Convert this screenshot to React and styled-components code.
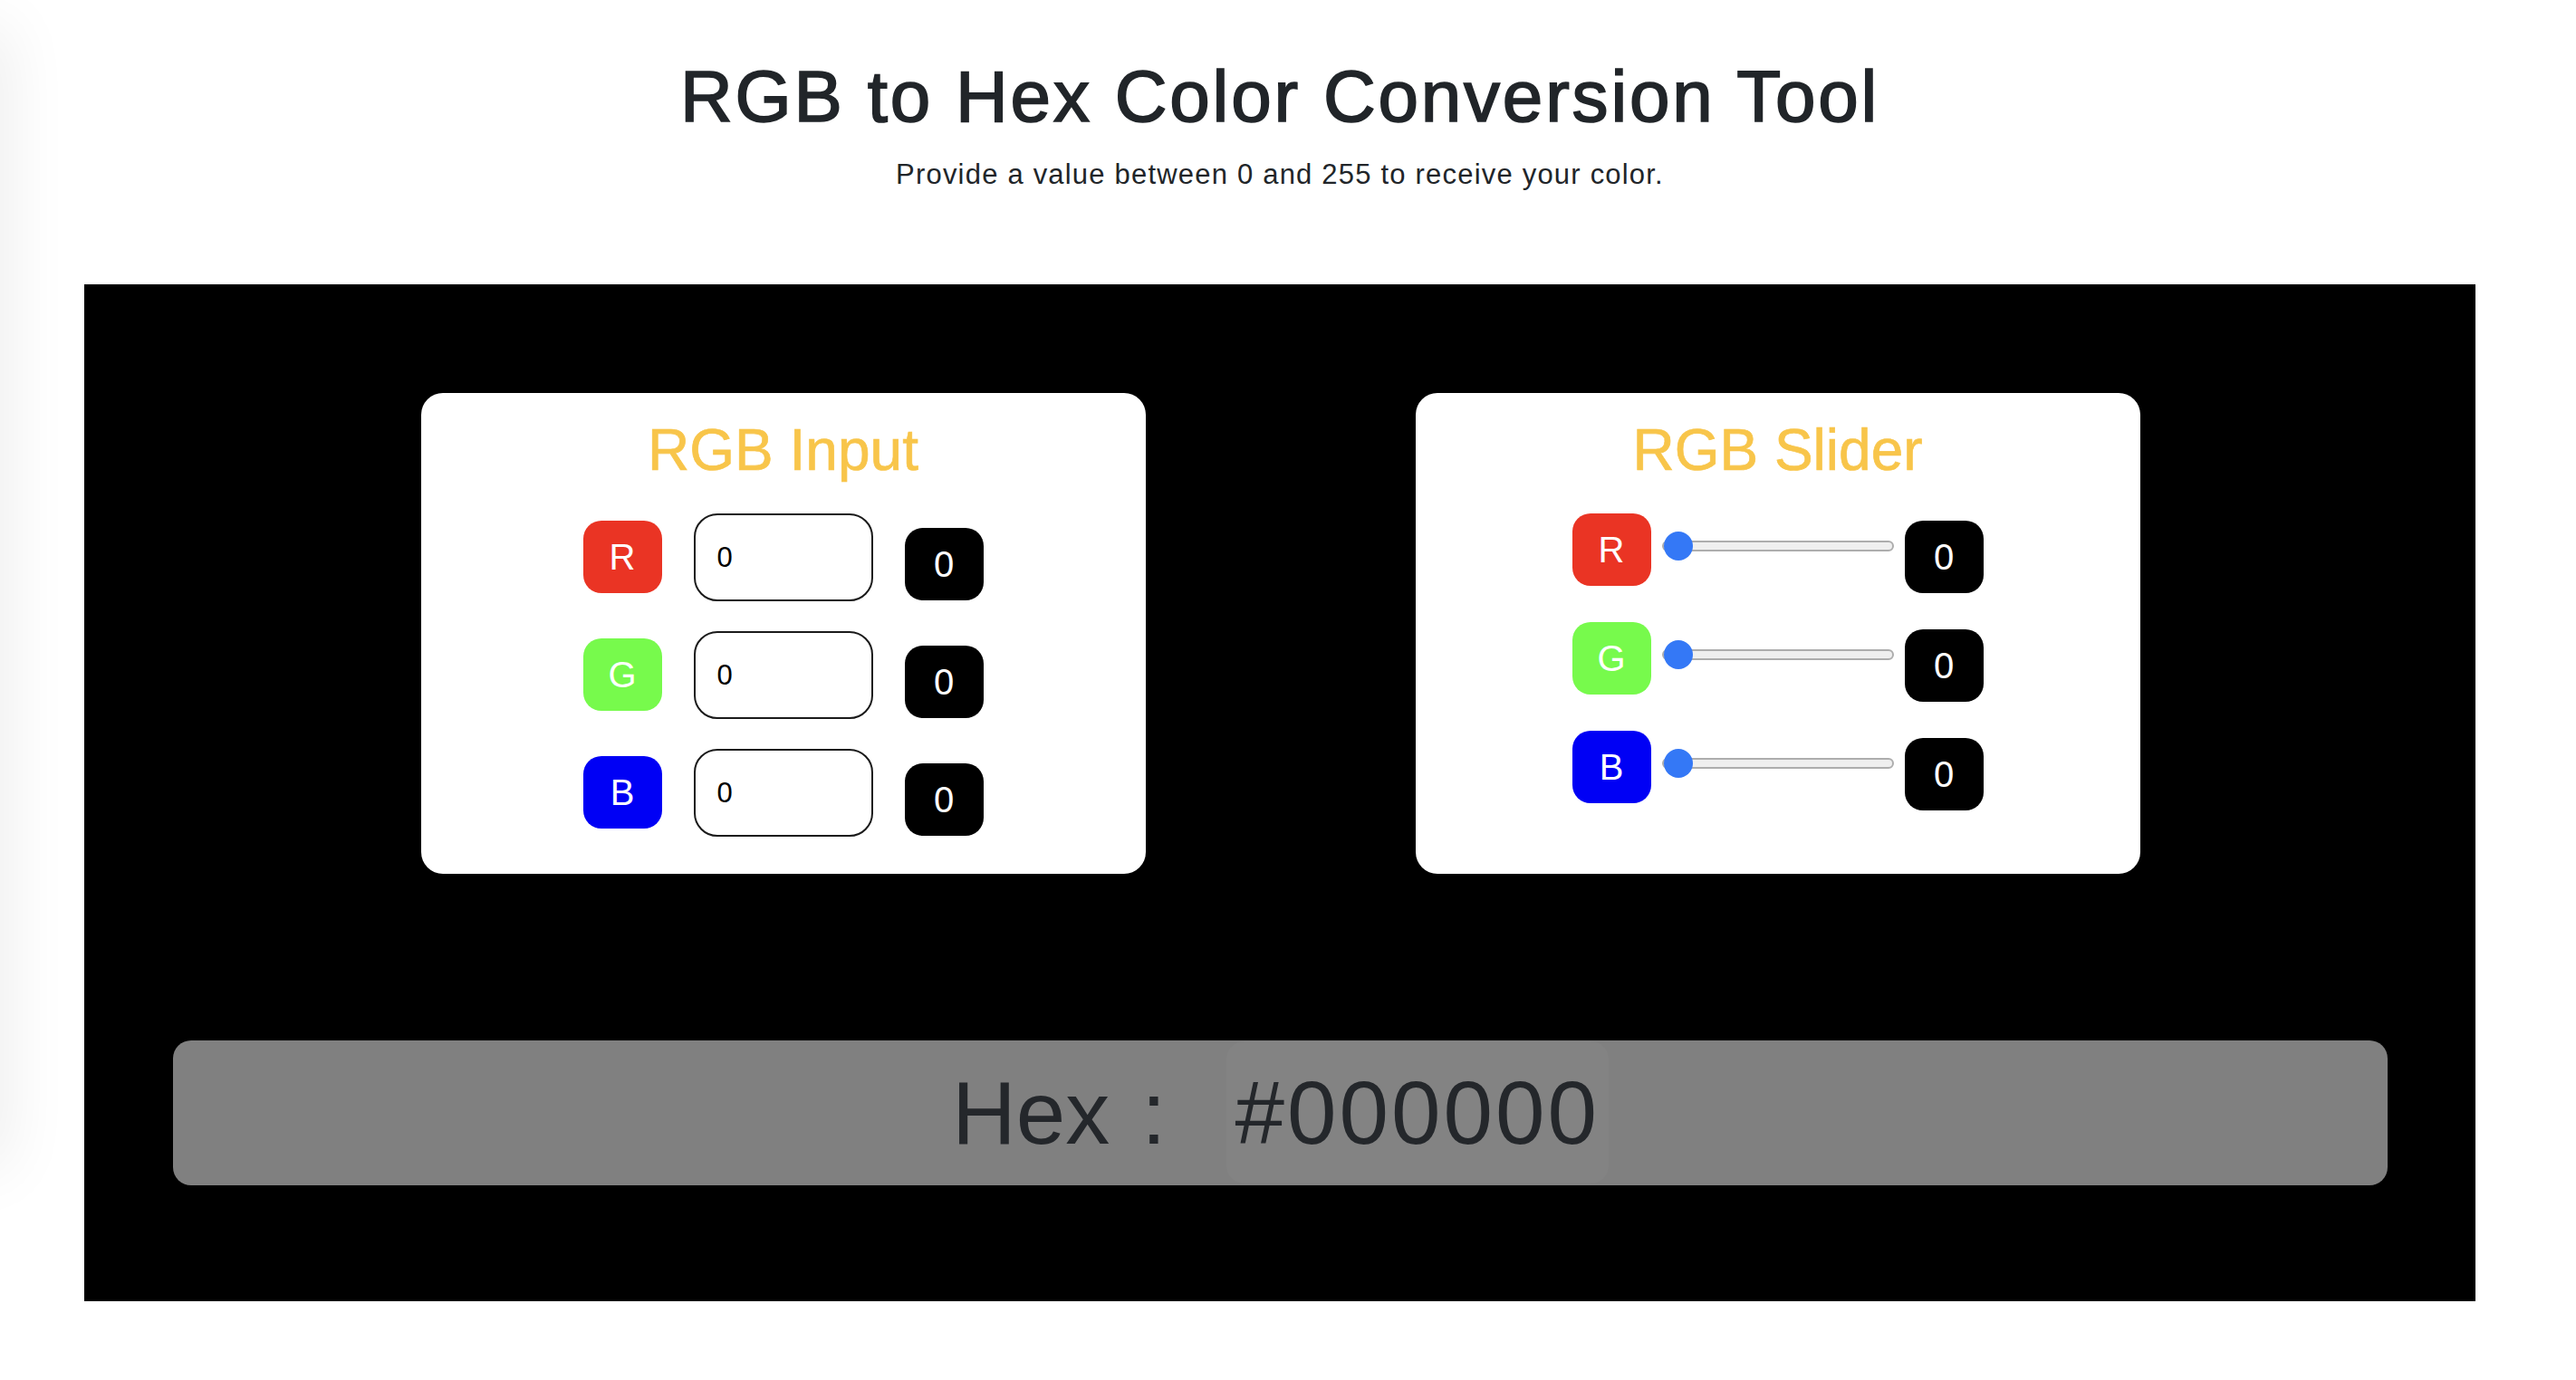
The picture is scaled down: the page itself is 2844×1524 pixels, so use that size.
import React, { useState } from "react";
import styled, { createGlobalStyle } from "styled-components";

const GlobalStyle = createGlobalStyle`
  html, body { margin: 0; padding: 0; background: #ffffff; }
  body { font-family: "Liberation Sans", Arial, sans-serif; color: #212529; }
  * { box-sizing: border-box; }
`;

const EdgeShadow = styled.div`
  position: fixed;
  left: -60px;
  top: 40px;
  width: 60px;
  height: 1240px;
  box-shadow: 0 0 70px 10px rgba(0, 0, 0, 0.07);
  pointer-events: none;
`;

const Page = styled.div`
  padding: 67px 111px 0 93px;
  text-align: center;
`;

const Title = styled.h1`
  margin: 0;
  font-size: 80px;
  line-height: 80px;
  font-weight: 400;
  letter-spacing: 2.8px;
  -webkit-text-stroke: 1.7px #212529;
  color: #212529;
`;

const Subtitle = styled.p`
  margin: 31px 0 0;
  font-size: 31px;
  line-height: 30px;
  letter-spacing: 1.2px;
  color: #212529;
`;

const Panel = styled.section`
  margin-top: 106px;
  background: #000000;
  padding: 120px 97px 128px 98px;
`;

const CardsRow = styled.div`
  display: flex;
  justify-content: center;
  gap: 298px;
`;

const Card = styled.div`
  width: 800px;
  height: 531px;
  background: #ffffff;
  border-radius: 24px;
  padding-top: 31px;
  display: flex;
  flex-direction: column;
  align-items: center;
`;

const CardTitle = styled.h2`
  margin: 0 0 38px;
  font-size: 64px;
  line-height: 64px;
  font-weight: 400;
  -webkit-text-stroke: 0.7px #f8c54a;
  color: #f8c54a;
`;

const Rows = styled.div`
  display: flex;
  flex-direction: column;
  gap: ${(p) => p.$gap}px;
`;

const Row = styled.div`
  display: flex;
  align-items: flex-start;
  gap: ${(p) => p.$gap}px;
`;

const Badge = styled.div`
  width: 87px;
  height: 80px;
  border-radius: 20px;
  background: ${(p) => p.$color};
  color: #ffffff;
  font-size: 40px;
  display: flex;
  align-items: center;
  justify-content: center;
  margin-top: ${(p) => p.$offset || 0}px;
`;

const ValueBox = styled.div`
  width: 87px;
  height: 80px;
  border-radius: 20px;
  background: #000000;
  color: #ffffff;
  font-size: 40px;
  display: flex;
  align-items: center;
  justify-content: center;
  margin-top: ${(p) => p.$offset || 0}px;
`;

const NumberInput = styled.input`
  width: 198px;
  height: 97px;
  border: 2px solid #1a1a1a;
  border-radius: 26px;
  padding: 0 0 0 24px;
  font-family: "Liberation Sans", Arial, sans-serif;
  font-size: 31px;
  color: #000000;
  background: #ffffff;
  outline: none;
`;

const Slider = styled.input.attrs({ type: "range", min: 0, max: 255 })`
  -webkit-appearance: none;
  appearance: none;
  width: 256px;
  height: 31px;
  margin: 20px 0 0;
  padding: 0;
  background: transparent;

  &::-webkit-slider-runnable-track {
    height: 12px;
    background: #efefef;
    border: 2px solid #adadad;
    border-radius: 8px;
  }

  &::-webkit-slider-thumb {
    -webkit-appearance: none;
    appearance: none;
    width: 32px;
    height: 32px;
    border-radius: 50%;
    background: #3478f6;
    border: none;
    margin-top: -12px;
  }
`;

const HexBar = styled.div`
  margin-top: 184px;
  height: 160px;
  border-radius: 20px;
  background: #808080;
  display: flex;
  justify-content: center;
  align-items: stretch;
  font-size: 98px;
  line-height: 98px;
  color: #24272b;
`;

const HexLabel = styled.span`
  display: flex;
  align-items: center;
`;

const Colon = styled.span`
  display: flex;
  align-items: center;
  justify-content: center;
  width: 97px;
`;

const HexValue = styled.span`
  display: flex;
  align-items: center;
  margin: 1px 0 2px 32px;
  padding: 0 10px 0 9px;
  border-radius: 20px;
  background: #838383;
  letter-spacing: 3px;
`;

const CHANNELS = [
  { key: "r", label: "R", color: "#ea3424" },
  { key: "g", label: "G", color: "#77fa4c" },
  { key: "b", label: "B", color: "#0000f5" },
];

const clamp = (v) => {
  const n = parseInt(v, 10);
  if (Number.isNaN(n)) return 0;
  return Math.max(0, Math.min(255, n));
};

const toHex = (n) => n.toString(16).padStart(2, "0").toUpperCase();

export default function App() {
  const [inputs, setInputs] = useState({ r: 0, g: 0, b: 0 });
  const [sliders, setSliders] = useState({ r: 0, g: 0, b: 0 });

  const hex = `#${toHex(sliders.r)}${toHex(sliders.g)}${toHex(sliders.b)}`;

  return (
    <>
      <GlobalStyle />
      <EdgeShadow />
      <Page>
        <Title>RGB to Hex Color Conversion Tool</Title>
        <Subtitle>Provide a value between 0 and 255 to receive your color.</Subtitle>
        <Panel>
          <CardsRow>
            <Card>
              <CardTitle>RGB Input</CardTitle>
              <Rows $gap={33}>
                {CHANNELS.map((c) => (
                  <Row key={c.key} $gap={35}>
                    <Badge $color={c.color} $offset={8}>
                      {c.label}
                    </Badge>
                    <NumberInput
                      type="text"
                      value={inputs[c.key]}
                      onChange={(e) => {
                        const v = clamp(e.target.value);
                        setInputs({ ...inputs, [c.key]: v });
                        setSliders({ ...sliders, [c.key]: v });
                      }}
                    />
                    <ValueBox $offset={16}>{inputs[c.key]}</ValueBox>
                  </Row>
                ))}
              </Rows>
            </Card>
            <Card>
              <CardTitle>RGB Slider</CardTitle>
              <Rows $gap={32}>
                {CHANNELS.map((c) => (
                  <Row key={c.key} $gap={12}>
                    <Badge $color={c.color}>{c.label}</Badge>
                    <Slider
                      value={sliders[c.key]}
                      onChange={(e) => {
                        const v = clamp(e.target.value);
                        setSliders({ ...sliders, [c.key]: v });
                        setInputs({ ...inputs, [c.key]: v });
                      }}
                    />
                    <ValueBox $offset={8}>{sliders[c.key]}</ValueBox>
                  </Row>
                ))}
              </Rows>
            </Card>
          </CardsRow>
          <HexBar>
            <HexLabel>Hex</HexLabel>
            <Colon>:</Colon>
            <HexValue>{hex}</HexValue>
          </HexBar>
        </Panel>
      </Page>
    </>
  );
}
